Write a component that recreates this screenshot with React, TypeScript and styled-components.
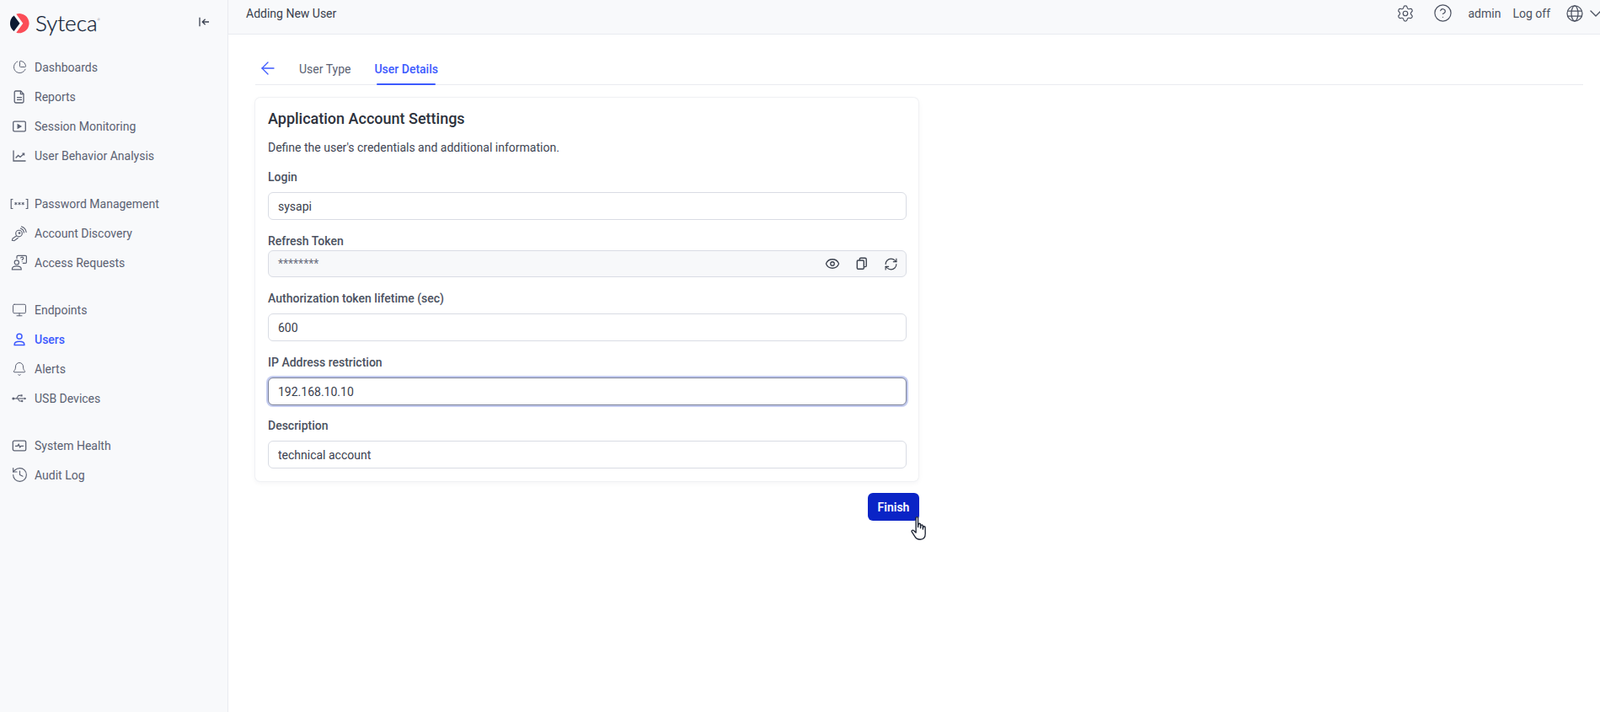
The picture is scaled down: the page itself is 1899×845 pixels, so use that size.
import styled, { createGlobalStyle } from "styled-components"
import {
  ArrowLeft,
  Bell,
  ChartPie,
  ChevronDown,
  CircleHelp,
  Eye,
  History,
  Monitor,
  RefreshCw,
  Settings,
} from "lucide-react"
import type { ReactNode } from "react"

const GlobalStyle = createGlobalStyle`
  html, body {
    margin: 0;
    height: 100%;
    overflow: hidden;
    background: #fff;
  }
  body {
    font-family: Roboto, "Liberation Sans", sans-serif;
    font-size: 14px;
    color: #4b5160;
  }
  * {
    box-sizing: border-box;
  }
`

const ReportIcon = () => (
  <svg width="18" height="18" viewBox="0 0 18 18" fill="none" stroke="currentColor" strokeWidth="1.3">
    <path d="M4.6 2h6l3.4 3.4v9.2c0 .8-.6 1.4-1.4 1.4H4.6c-.8 0-1.4-.6-1.4-1.4V3.4c0-.8.6-1.4 1.4-1.4z" />
    <path d="M10.4 2v3.6H14" />
    <path d="M6 9.6h6M6 12.4h6" />
  </svg>
)

const SessionIcon = () => (
  <svg width="18" height="18" viewBox="0 0 18 18" fill="none" stroke="currentColor" strokeWidth="1.3">
    <rect x="1.7" y="3.2" width="14.6" height="11.6" rx="1.4" />
    <path d="M7.2 6.8v4.4l3.6-2.2z" fill="currentColor" />
  </svg>
)

const ChartIcon = () => (
  <svg width="18" height="18" viewBox="0 0 18 18" fill="none" stroke="currentColor" strokeWidth="1.3">
    <path d="M2 2.5V15h14.5" />
    <path d="M4.6 11.5l3-3 2.4 2 4.4-4" />
    <path d="M12.4 6.2h2.2v2.2" />
  </svg>
)

const PasswordIcon = () => (
  <svg width="22" height="14" viewBox="0 0 22 14" fill="none" stroke="currentColor" strokeWidth="1.2">
    <path d="M3.4 1.5H1.2v11h2.2M18.6 1.5h2.2v11h-2.2" />
    <g strokeWidth="1">
      <path d="M6.8 4.9v3.4M5.3 5.7l3 1.8M8.3 5.7l-3 1.8" />
      <path d="M11 4.9v3.4M9.5 5.7l3 1.8M12.5 5.7l-3 1.8" />
      <path d="M15.2 4.9v3.4M13.7 5.7l3 1.8M16.7 5.7l-3 1.8" />
    </g>
  </svg>
)

const DiscoveryIcon = () => (
  <svg width="20" height="20" viewBox="0 0 20 20" fill="none" stroke="currentColor" strokeWidth="1.15">
    <circle cx="9.5" cy="10" r="3.8" />
    <path d="M6.8 12.8l-4.8 3.2-.6 2.3 2.5.4 4.7-3.5" />
    <circle cx="10" cy="9.5" r="0.8" />
    <path d="M11 4A6 6 0 0 1 15.5 9.5" />
    <path d="M12 1.7A8.3 8.3 0 0 1 18.2 9" />
  </svg>
)

const AccessIcon = () => (
  <svg width="20" height="20" viewBox="0 0 20 20" fill="none" stroke="currentColor" strokeWidth="1.2">
    <circle cx="6.8" cy="9.4" r="2.6" />
    <path d="M1.4 17.2c0-2.2 1.6-3.4 5.4-3.4s5.4 1.2 5.4 3.4v.6H1.4z" />
    <path d="M7 5.2V2.6c0-.7.5-1.2 1.2-1.2h9c.7 0 1.2.5 1.2 1.2v6.6c0 .7-.5 1.2-1.2 1.2h-3.4" />
    <path d="M11.5 4.4c.2-.9.9-1.3 1.7-1.3s1.6.5 1.6 1.4c0 1.2-1.6 1.2-1.6 2.4" />
    <circle cx="13.2" cy="8.6" r="0.5" fill="currentColor" stroke="none" />
  </svg>
)

const UserIcon = () => (
  <svg width="18" height="18" viewBox="0 0 18 18" fill="none" stroke="currentColor" strokeWidth="1.5">
    <circle cx="9" cy="5.2" r="3" />
    <path d="M3.2 15.4v-.9c0-2 1.7-3.3 5.8-3.3s5.8 1.3 5.8 3.3v.9z" />
  </svg>
)

const UsbIcon = () => (
  <svg width="18" height="18" viewBox="0 0 18 18" fill="none" stroke="currentColor" strokeWidth="1.1">
    <circle cx="1.8" cy="9" r="1.5" fill="currentColor" stroke="none" />
    <path d="M2 9h14.5" />
    <path d="M14.8 7.4l2.4 1.6-2.4 1.6z" fill="currentColor" stroke="none" />
    <path d="M5.5 9l2.5-3.6h2.4" />
    <rect x="10.4" y="4.3" width="2.2" height="2.2" fill="currentColor" stroke="none" />
    <path d="M7 9l2.2 3h2.4" />
    <circle cx="12.2" cy="12" r="1.2" fill="currentColor" stroke="none" />
  </svg>
)

const HealthIcon = () => (
  <svg width="18" height="18" viewBox="0 0 18 18" fill="none" stroke="currentColor" strokeWidth="1.3">
    <rect x="1.3" y="3.2" width="15.4" height="11.6" rx="1.6" />
    <path d="M4 9.4h2.8l1.3-2 1.6 3.4 1.3-1.4H14" />
  </svg>
)

const CollapseIcon = () => (
  <svg width="14" height="14" viewBox="0 0 14 14" fill="none" stroke="currentColor" strokeWidth="1.3">
    <path d="M2 1.8v10.4" />
    <path d="M13 7H5.2M8.6 3.8L5.2 7l3.4 3.2" />
  </svg>
)

const GlobeIcon = () => (
  <svg width="22" height="22" viewBox="0 0 22 22" fill="none" stroke="currentColor" strokeWidth="1.25">
    <circle cx="11" cy="11" r="9" />
    <ellipse cx="11" cy="11" rx="4" ry="9" />
    <path d="M2.8 8h16.4M2.8 14h16.4" />
  </svg>
)

const CopyIcon = () => (
  <svg width="16" height="16" viewBox="0 0 16 16" fill="none" stroke="currentColor" strokeWidth="1.4">
    <path d="M5.4 4V2.4c0-.7.5-1.1 1.1-1.1h5.2c.9 0 1.5.6 1.5 1.5v7.7c0 .6-.5 1.1-1.1 1.1h-1.6" />
    <rect x="2.3" y="4" width="8" height="10.2" rx="1.2" />
  </svg>
)

const HandCursor = () => (
  <svg width="22" height="32" viewBox="0 0 18 26" fill="#fff" stroke="#1c2333" strokeWidth="1.1" strokeLinejoin="round">
    <path d="M5 2.2c0-1.3 2-1.3 2 0V11l.4-2.6c0-1.2 2-1.2 2 0V12l.3-2.4c.2-1.1 2-1 2 .1V13l.4-2c.2-1 1.8-.9 1.9.2l.1 6.2c0 3-1.6 5.6-5 5.6-2.6 0-4-.9-5.2-3L1 15.6c-.6-1.2.7-2.2 1.7-1.3L5 16.4z" />
  </svg>
)

const Logo = () => (
  <svg width="24" height="24" viewBox="0 0 24 24">
    <path d="M7.3 .7A11.6 11.6 0 1 1 7.3 22.7L15.3 11.7z" fill="#fb4d57" />
    <path d="M4.6 2.4L11.5 11.7 4.6 21A11.6 11.6 0 0 1 4.6 2.4z" fill="#0c1b33" />
  </svg>
)

interface NavEntry {
  label: string
  icon: ReactNode
  active?: boolean
}

const navGroups: NavEntry[][] = [
  [
    { label: "Dashboards", icon: <ChartPie size={17} strokeWidth={1.4} /> },
    { label: "Reports", icon: <ReportIcon /> },
    { label: "Session Monitoring", icon: <SessionIcon /> },
    { label: "User Behavior Analysis", icon: <ChartIcon /> },
  ],
  [
    { label: "Password Management", icon: <PasswordIcon /> },
    { label: "Account Discovery", icon: <DiscoveryIcon /> },
    { label: "Access Requests", icon: <AccessIcon /> },
  ],
  [
    { label: "Endpoints", icon: <Monitor size={18} strokeWidth={1.3} /> },
    { label: "Users", icon: <UserIcon />, active: true },
    { label: "Alerts", icon: <Bell size={18} strokeWidth={1.3} /> },
    { label: "USB Devices", icon: <UsbIcon /> },
  ],
  [
    { label: "System Health", icon: <HealthIcon /> },
    { label: "Audit Log", icon: <History size={21} strokeWidth={1.3} /> },
  ],
]

const App = () => {
  return (
    <>
      <GlobalStyle />
      <Layout>
        <Sidebar>
          <Brand>
            <BrandMark>
              <Logo />
              <BrandName>
                Syteca<BrandDot>®</BrandDot>
              </BrandName>
            </BrandMark>
            <CollapseButton>
              <CollapseIcon />
            </CollapseButton>
          </Brand>
          <Nav>
            {navGroups.map((group) => (
              <NavGroup key={group[0].label}>
                {group.map((item) => (
                  <NavItem key={item.label} $active={item.active}>
                    <NavIcon>{item.icon}</NavIcon>
                    {item.label}
                  </NavItem>
                ))}
              </NavGroup>
            ))}
          </Nav>
        </Sidebar>

        <Main>
          <TopBar>
            <PageTitle>Adding New User</PageTitle>
            <TopActions>
              <TopIcon $gap={22}>
                <Settings size={22} strokeWidth={1.3} />
              </TopIcon>
              <TopIcon $gap={18}>
                <CircleHelp size={23} strokeWidth={1.25} />
              </TopIcon>
              <TopLink>admin</TopLink>
              <TopLink>Log off</TopLink>
              <Language>
                <GlobeIcon />
                <ChevronDown size={24} strokeWidth={1.4} />
              </Language>
            </TopActions>
          </TopBar>

          <Content>
            <Tabs>
              <BackLink>
                <ArrowLeft size={24} strokeWidth={1.3} />
              </BackLink>
              <Tab>User Type</Tab>
              <Tab $active>User Details</Tab>
            </Tabs>

            <Card>
              <CardTitle>Application Account Settings</CardTitle>
              <CardText>Define the user's credentials and additional information.</CardText>

              <Field $gap={18}>
                <FieldLabel>Login</FieldLabel>
                <Input defaultValue="sysapi" />
              </Field>

              <Field $gap={17}>
                <FieldLabel $tight>Refresh Token</FieldLabel>
                <TokenBox>
                  <TokenValue>********</TokenValue>
                  <TokenActions>
                    <TokenAction>
                      <Eye size={18} strokeWidth={1.7} />
                    </TokenAction>
                    <TokenAction>
                      <CopyIcon />
                    </TokenAction>
                    <TokenAction>
                      <RefreshCw size={17} strokeWidth={1.6} />
                    </TokenAction>
                  </TokenActions>
                </TokenBox>
              </Field>

              <Field $gap={17}>
                <FieldLabel>Authorization token lifetime (sec)</FieldLabel>
                <Input defaultValue="600" />
              </Field>

              <Field $gap={17}>
                <FieldLabel>IP Address restriction</FieldLabel>
                <Input $focused defaultValue="192.168.10.10" />
              </Field>

              <Field $gap={16}>
                <FieldLabel>Description</FieldLabel>
                <Input defaultValue="technical account" />
              </Field>
            </Card>

            <Footer>
              <FinishButton>
                Finish
                <CursorOverlay>
                  <HandCursor />
                </CursorOverlay>
              </FinishButton>
            </Footer>
          </Content>
        </Main>
      </Layout>
    </>
  )
}

export default App

const Layout = styled.div`
  display: flex;
  height: 845px;
  width: 1899px;
  overflow: hidden;
`

const Sidebar = styled.aside`
  width: 271px;
  flex-shrink: 0;
  background-color: #f8f9fb;
  border-right: 1px solid #e9ebf0;
`

const Brand = styled.div`
  display: flex;
  align-items: center;
  justify-content: space-between;
  height: 55px;
  padding: 0 21px 0 12px;
`

const BrandMark = styled.div`
  display: flex;
  align-items: center;
  gap: 6px;
`

const BrandName = styled.span`
  font-family: Lato, "Open Sans", sans-serif;
  font-size: 26px;
  font-weight: 300;
  -webkit-text-stroke: 0.25px #0f1b33;
  color: #0f1b33;
  line-height: 1;
  margin-top: -1px;
`

const BrandDot = styled.sup`
  font-size: 4px;
  vertical-align: 12px;
  line-height: 0;
  -webkit-text-stroke: 0;
`

const CollapseButton = styled.span`
  display: flex;
  color: #3c4352;
  margin-top: -3px;
`

const Nav = styled.nav`
  display: flex;
  flex-direction: column;
  gap: 21px;
  padding-top: 7px;
`

const NavGroup = styled.div`
  display: flex;
  flex-direction: column;

  &:first-child {
    margin-bottom: 1px;
  }
`

const NavItem = styled.a<{ $active?: boolean }>`
  display: flex;
  align-items: center;
  height: 35px;
  color: ${({ $active }) => ($active ? "#3d5afe" : "#5b6172")};
  font-weight: ${({ $active }) => ($active ? 500 : 400)};
  font-size: 14px;
  white-space: nowrap;
`

const NavIcon = styled.span`
  display: flex;
  align-items: center;
  justify-content: center;
  width: 46px;
  margin-right: -5px;
  flex-shrink: 0;
`

const Main = styled.main`
  flex: 1;
  min-width: 0;
  display: flex;
  flex-direction: column;
`

const TopBar = styled.header`
  display: flex;
  align-items: center;
  justify-content: space-between;
  height: 41px;
  padding: 0 0 9px 21px;
  background-color: #f8f9fb;
  border-bottom: 1px solid #e9ebf0;
`

const PageTitle = styled.h1`
  margin: 0;
  font-size: 14px;
  font-weight: 400;
  color: #3a404d;
`

const TopActions = styled.div`
  display: flex;
  align-items: center;
  color: #4b5160;
`

const TopIcon = styled.span<{ $gap: number }>`
  display: flex;
  margin-right: ${({ $gap }) => $gap}px;
`

const TopLink = styled.span`
  font-size: 14px;
  margin-right: 14px;
`

const Language = styled.span`
  display: flex;
  align-items: center;
  gap: 2px;
  margin-left: 4px;
  margin-right: -7px;
`

const Content = styled.div`
  padding: 23px 20px 0 32px;
`

const Tabs = styled.div`
  display: flex;
  align-items: stretch;
  height: 37px;
  border-bottom: 1px solid #e9ebf0;
`

const BackLink = styled.span`
  display: flex;
  align-items: center;
  width: 52px;
  padding: 0 0 2px 3px;
  color: #3d5afe;
`

const Tab = styled.span<{ $active?: boolean }>`
  position: relative;
  display: flex;
  align-items: center;
  margin-right: 28px;
  font-weight: ${({ $active }) => ($active ? 500 : 400)};
  color: ${({ $active }) => ($active ? "#3d5afe" : "#5b6172")};

  &::after {
    content: "";
    display: ${({ $active }) => ($active ? "block" : "none")};
    position: absolute;
    left: 3px;
    right: 3px;
    bottom: -1px;
    height: 2px;
    border-radius: 1px;
    background-color: #3d5afe;
  }
`

const Card = styled.section`
  width: 787px;
  margin-top: 15px;
  padding: 14px 14px 15px 15px;
  background-color: #fff;
  border-radius: 6px;
  box-shadow:
    0 0 0 1px #f0f1f4,
    0 2px 6px rgba(30, 40, 70, 0.06);
`

const CardTitle = styled.h2`
  margin: 0;
  height: 22px;
  line-height: 22px;
  font-size: 18px;
  font-weight: 500;
  color: #2c313c;
`

const CardText = styled.p`
  margin: 15px 0 0;
  height: 17px;
  line-height: 17px;
  font-size: 14px;
  color: #3f4553;
`

const Field = styled.div<{ $gap: number }>`
  margin-top: ${({ $gap }) => $gap}px;
  display: flex;
  flex-direction: column;
`

const FieldLabel = styled.label<{ $tight?: boolean }>`
  height: 17px;
  line-height: 17px;
  margin-bottom: ${({ $tight }) => ($tight ? 2 : 9)}px;
  font-size: 14px;
  font-weight: 500;
  color: #4b5160;
`

const Input = styled.input<{ $focused?: boolean }>`
  width: 100%;
  height: 33px;
  padding: 0 11px;
  font: inherit;
  font-size: 14px;
  color: #3a404d;
  background-color: #fff;
  border: 1px solid ${({ $focused }) => ($focused ? "#7c8299" : "#d9dce4")};
  border-radius: 6px;
  box-shadow: ${({ $focused }) => ($focused ? "0 0 0 2px #c3cbef" : "none")};
  outline: none;
`

const TokenBox = styled.div`
  display: flex;
  align-items: center;
  justify-content: space-between;
  height: 32px;
  padding: 0 0 0 11px;
  background-color: #f7f8fa;
  border: 1px solid #d9dce4;
  border-radius: 6px;
`

const TokenValue = styled.span`
  color: #6b7080;
  font-size: 14px;
`

const TokenActions = styled.div`
  display: flex;
  align-items: center;
  color: #3a404d;
`

const TokenAction = styled.span`
  display: flex;
  align-items: center;
  justify-content: center;
  width: 35px;
`

const Footer = styled.div`
  display: flex;
  justify-content: flex-end;
  width: 788px;
  margin-top: 14px;
`

const FinishButton = styled.button`
  position: relative;
  width: 61px;
  height: 33px;
  padding: 0;
  border: none;
  border-radius: 6px;
  background-color: #0a24c6;
  color: #fff;
  font-family: inherit;
  font-size: 14px;
  font-weight: 600;
`

const CursorOverlay = styled.span`
  position: absolute;
  left: 51px;
  top: 27px;
  display: flex;
`
